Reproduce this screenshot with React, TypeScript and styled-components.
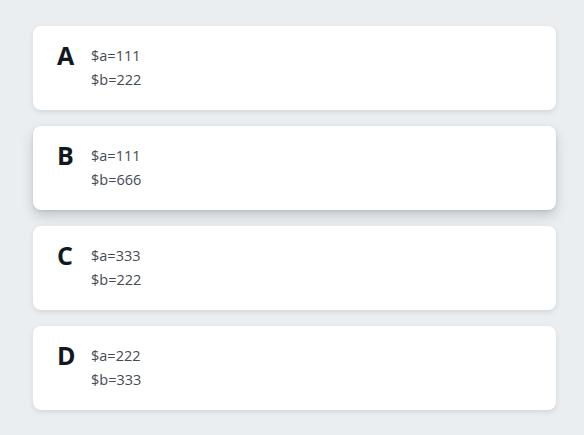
import React from "react";
import styled, { createGlobalStyle } from "styled-components";

const Global = createGlobalStyle`
  html, body { margin: 0; padding: 0; background: #eaeef1; }
  body { font-family: "Open Sans", "Noto Sans", sans-serif; }
`;

const Page = styled.div`
  display: flex;
  flex-direction: column;
  gap: 16px;
  padding: 26px 28px 24px 33px;
`;

const Card = styled.div<{ $raised?: boolean }>`
  display: flex;
  align-items: flex-start;
  gap: 17px;
  height: 84px;
  box-sizing: border-box;
  padding: 16px 24px;
  background: #ffffff;
  border-radius: 8px;
  box-shadow: ${(p) =>
    p.$raised
      ? "0 6px 12px rgba(60, 70, 85, 0.22), 0 1px 3px rgba(60,70,85,0.12)"
      : "0 2px 5px rgba(60, 70, 85, 0.14)"};
`;

const Letter = styled.div`
  font-weight: 700;
  font-size: 25px;
  line-height: 26px;
  color: #111822;
  width: 17px;
`;

const Values = styled.div`
  display: flex;
  flex-direction: column;
  font-size: 14.5px;
  line-height: 24px;
  color: #464b52;
  padding-top: 2px;
`;

const rows = [
  { k: "A", a: "111", b: "222" },
  { k: "B", a: "111", b: "666", raised: true },
  { k: "C", a: "333", b: "222" },
  { k: "D", a: "222", b: "333" },
];

export default function App() {
  return (
    <>
      <Global />
      <Page>
        {rows.map((r) => (
          <Card key={r.k} $raised={r.raised}>
            <Letter>{r.k}</Letter>
            <Values>
              <span>$a={r.a}</span>
              <span>$b={r.b}</span>
            </Values>
          </Card>
        ))}
      </Page>
    </>
  );
}
